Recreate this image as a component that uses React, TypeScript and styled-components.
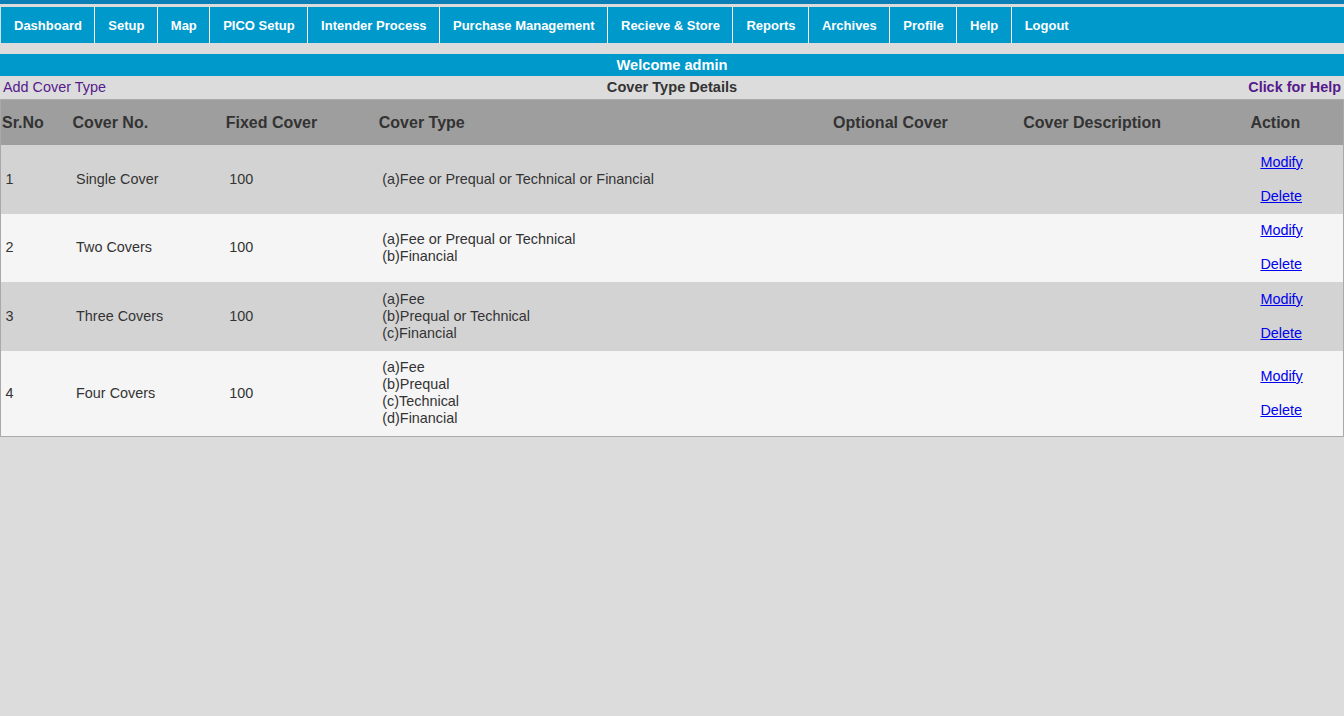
import React from "react";
import styled, { createGlobalStyle } from "styled-components";

const COLORS = {
	page: "#dcdcdc",
	blue: "#0099cc",
	blueDark: "#0b7fb6",
	headerRow: "#9e9e9e",
	rowDark: "#d3d3d3",
	rowLight: "#f5f5f5",
	border: "#a9a9a9",
	text: "#333333",
	visited: "#551a8b",
	link: "#0000ee",
};

const GlobalStyle = createGlobalStyle`
	html, body {
		margin: 0;
		padding: 0;
		background: ${COLORS.page};
		font-family: "Liberation Sans", Arial, sans-serif;
		color: ${COLORS.text};
	}
`;

const Page = styled.div`
	display: flex;
	flex-direction: column;
	min-height: 716px;
	border-top: 4px solid ${COLORS.blueDark};
`;

const NavBar = styled.ul`
	display: flex;
	margin: 3px 0 11px 0;
	padding: 0;
	list-style: none;
	height: 36px;
	background: ${COLORS.blue};
`;

const NavItem = styled.li`
	display: flex;
	align-items: center;
	padding: 0 12.4px 0 13px;
	border-left: 1px solid #ffffff;
	color: #ffffff;
	font-size: 13px;
	font-weight: bold;
	cursor: pointer;

	&:first-child {
		border-left-color: #cfe3ec;
	}
`;

const WelcomeBar = styled.div`
	height: 22px;
	line-height: 22px;
	background: ${COLORS.blue};
	color: #ffffff;
	font-size: 14.6px;
	font-weight: bold;
	text-align: center;
`;

const TitleRow = styled.div`
	display: grid;
	grid-template-columns: 1fr auto 1fr;
	align-items: start;
	height: 23px;
	line-height: 22px;
	padding: 0 3px;
	font-size: 14.4px;
`;

const PurpleLink = styled.a<{ $bold?: boolean; $right?: boolean }>`
	color: ${COLORS.visited};
	text-decoration: none;
	font-weight: ${(p) => (p.$bold ? "bold" : "normal")};
	justify-self: ${(p) => (p.$right ? "end" : "start")};
	cursor: pointer;
`;

const Title = styled.span`
	font-weight: bold;
	font-size: 14.6px;
	color: ${COLORS.text};
`;

const Table = styled.table`
	width: 1344px;
	border: 1px solid ${COLORS.border};
	border-collapse: collapse;
	table-layout: fixed;
`;

const HeadCell = styled.th`
	height: 45px;
	padding: 0 0 0 1px;
	background: ${COLORS.headerRow};
	color: ${COLORS.text};
	font-size: 16px;
	font-weight: bold;
	text-align: left;
	vertical-align: middle;
`;

const Row = styled.tr<{ $dark: boolean }>`
	background: ${(p) => (p.$dark ? COLORS.rowDark : COLORS.rowLight)};
`;

const Cell = styled.td<{ $action?: boolean }>`
	padding: 8.5px 0 9px ${(p) => (p.$action ? "11px" : "4.5px")};
	font-size: 14.4px;
	line-height: 17px;
	color: ${COLORS.text};
	vertical-align: middle;
`;

const ActionLink = styled.a`
	color: ${COLORS.link};
	text-decoration: underline;
	cursor: pointer;
`;

const columns = [
	{ title: "Sr.No", width: 71 },
	{ title: "Cover No.", width: 153 },
	{ title: "Fixed Cover", width: 153 },
	{ title: "Cover Type", width: 454 },
	{ title: "Optional Cover", width: 190 },
	{ title: "Cover Description", width: 227 },
	{ title: "Action", width: 94 },
];

const rows = [
	{ no: "1", name: "Single Cover", fixed: "100", types: ["(a)Fee or Prequal or Technical or Financial"] },
	{ no: "2", name: "Two Covers", fixed: "100", types: ["(a)Fee or Prequal or Technical", "(b)Financial"] },
	{ no: "3", name: "Three Covers", fixed: "100", types: ["(a)Fee", "(b)Prequal or Technical", "(c)Financial"] },
	{ no: "4", name: "Four Covers", fixed: "100", types: ["(a)Fee", "(b)Prequal", "(c)Technical", "(d)Financial"] },
];

const menu = [
	"Dashboard",
	"Setup",
	"Map",
	"PICO Setup",
	"Intender Process",
	"Purchase Management",
	"Recieve & Store",
	"Reports",
	"Archives",
	"Profile",
	"Help",
	"Logout",
];

export default function App() {
	return <Page>
		<GlobalStyle/>
		<NavBar>
			{menu.map((m) => <NavItem key={m}>{m}</NavItem>)}
		</NavBar>
		<WelcomeBar>Welcome admin</WelcomeBar>
		<TitleRow>
			<PurpleLink>Add Cover Type</PurpleLink>
			<Title>Cover Type Details</Title>
			<PurpleLink $bold $right>Click for Help</PurpleLink>
		</TitleRow>
		<Table>
			<colgroup>
				{columns.map((c) => <col key={c.title} style={{ width: c.width }}/>)}
			</colgroup>
			<thead>
				<tr>
					{columns.map((c) => <HeadCell key={c.title}>{c.title}</HeadCell>)}
				</tr>
			</thead>
			<tbody>
				{rows.map((r, i) => <Row key={r.no} $dark={i % 2 === 0}>
					<Cell>{r.no}</Cell>
					<Cell>{r.name}</Cell>
					<Cell>{r.fixed}</Cell>
					<Cell>
						{r.types.map((t, j) => <React.Fragment key={t}>
							{j > 0 && <br/>}
							{t}
						</React.Fragment>)}
					</Cell>
					<Cell/>
					<Cell/>
					<Cell $action>
						<ActionLink>Modify</ActionLink>
						<br/><br/>
						<ActionLink>Delete</ActionLink>
					</Cell>
				</Row>)}
			</tbody>
		</Table>
	</Page>;
}
